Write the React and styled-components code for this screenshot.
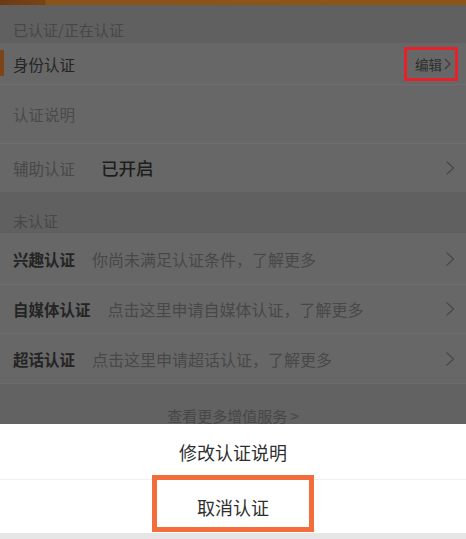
import React from "react";
import styled, { createGlobalStyle } from "styled-components";

const GlobalStyle = createGlobalStyle`
  html, body { margin: 0; padding: 0; }
  body {
    width: 466px;
    height: 539px;
    overflow: hidden;
    background: #676767;
    font-family: "Noto Sans CJK SC", "Noto Sans", sans-serif;
  }
  #root { position: relative; width: 466px; height: 539px; }
`;

const Page = styled.div`
  display: flex;
  flex-direction: column;
  width: 466px;
  height: 539px;
  background: #676767;
`;

const TopStrip = styled.div`
  height: 5px;
  flex: none;
  background: linear-gradient(90deg, #6e3a12 0, #7a4313 45px, #8a5418 46px, #8c5619 100%);
`;

const SectionHeader = styled.div`
  box-sizing: border-box;
  height: ${(p) => p.$h}px;
  flex: none;
  display: flex;
  align-items: flex-end;
  padding: 0 13px ${(p) => p.$pb}px;
  background: #606060;
  color: #474747;
  font-size: 15px;
  line-height: 18px;
`;

const Row = styled.div`
  position: relative;
  box-sizing: border-box;
  height: ${(p) => p.$h}px;
  flex: none;
  display: flex;
  align-items: center;
  padding: 0 10px 0 13px;
  background: #676767;
  border-top: ${(p) => (p.$line ? "1px solid #6d6d6d" : "none")};
`;

const Marker = styled.span`
  position: absolute;
  left: 0;
  top: 7px;
  bottom: 8px;
  width: 4px;
  background: #7d4418;
`;

const Title = styled.span`
  font-size: 15.5px;
  line-height: 20px;
  color: ${(p) => p.$color || "#242424"};
  font-weight: ${(p) => (p.$bold ? 700 : 400)};
  white-space: nowrap;
`;

const Desc = styled.span`
  margin-left: ${(p) => p.$gap}px;
  font-size: 16px;
  line-height: 20px;
  color: #484848;
  white-space: nowrap;
`;

const Status = styled.span`
  margin-left: 26px;
  font-size: 17.5px;
  line-height: 20px;
  color: #1e1e1e;
  font-weight: 500;
`;

const Spacer = styled.span`
  flex: 1;
`;

const Chevron = styled.svg`
  width: 10px;
  height: 16px;
  flex: none;
  margin-right: 1px;
`;

const EditLink = styled.span`
  box-sizing: border-box;
  display: inline-flex;
  align-items: center;
  gap: 2px;
  height: 34px;
  margin-right: -2px;
  padding: 0 4px 0 8px;
  border: 3px solid #e5212c;
  font-size: 13.5px;
  color: #2e2e2e;
`;

const SmallChevron = styled.svg`
  width: 7px;
  height: 12px;
`;

const MoreArea = styled.div`
  flex: 1;
  display: flex;
  justify-content: center;
  padding-top: 22px;
  background: #626262;
  border-top: 1px solid #6b6b6b;
  color: #474747;
  font-size: 15px;
  line-height: 20px;
`;

const Sheet = styled.div`
  position: absolute;
  left: 0;
  right: 0;
  bottom: 0;
  display: flex;
  flex-direction: column;
  background: #ffffff;
`;

const SheetItem = styled.div`
  box-sizing: border-box;
  height: ${(p) => p.$h}px;
  display: flex;
  align-items: ${(p) => (p.$top ? "flex-start" : "center")};
  justify-content: center;
  border-top: ${(p) => (p.$line ? "1px solid #efefef" : "none")};
  font-size: 18px;
  color: #2f2f2f;
`;

const Highlight = styled.div`
  box-sizing: border-box;
  flex: none;
  width: 162px;
  height: 57px;
  margin-top: -5px;
  padding-top: 7px;
  display: flex;
  align-items: center;
  justify-content: center;
  border: 5px solid #f36c3c;
`;

const SheetFooter = styled.div`
  height: 6px;
  background: #e6e6e6;
`;

const Chev = ({ small }) =>
  small ? (
    <SmallChevron viewBox="0 0 7 12">
      <path d="M1 1 L6 6 L1 11" fill="none" stroke="#3a3a3a" strokeWidth="1.2" />
    </SmallChevron>
  ) : (
    <Chevron viewBox="0 0 10 16">
      <path d="M1.5 1.5 L8.5 8 L1.5 14.5" fill="none" stroke="#484848" strokeWidth="1.2" />
    </Chevron>
  );

export default function App() {
  return (
    <>
      <GlobalStyle />
      <Page>
        <TopStrip />
        <SectionHeader $h={38} $pb={4}>已认证/正在认证</SectionHeader>
        <Row $h={41}>
          <Marker />
          <Title>身份认证</Title>
          <Spacer />
          <EditLink>
            编辑
            <Chev small />
          </EditLink>
        </Row>
        <Row $h={59} $line>
          <Title $color="#4a4a4a">认证说明</Title>
        </Row>
        <Row $h={49} $line>
          <Title $color="#484848">辅助认证</Title>
          <Status>已开启</Status>
          <Spacer />
          <Chev />
        </Row>
        <SectionHeader $h={41} $pb={3}>未认证</SectionHeader>
        <Row $h={51}>
          <Title $bold>兴趣认证</Title>
          <Desc $gap={17}>你尚未满足认证条件，了解更多</Desc>
          <Spacer />
          <Chev />
        </Row>
        <Row $h={49} $line>
          <Title $bold>自媒体认证</Title>
          <Desc $gap={17}>点击这里申请自媒体认证，了解更多</Desc>
          <Spacer />
          <Chev />
        </Row>
        <Row $h={50} $line>
          <Title $bold>超话认证</Title>
          <Desc $gap={17}>点击这里申请超话认证，了解更多</Desc>
          <Spacer />
          <Chev />
        </Row>
        <MoreArea>查看更多增值服务 &gt;</MoreArea>
      </Page>
      <Sheet>
        <SheetItem $h={55}>修改认证说明</SheetItem>
        <SheetItem $h={54} $line $top>
          <Highlight>取消认证</Highlight>
        </SheetItem>
        <SheetFooter />
      </Sheet>
    </>
  );
}
